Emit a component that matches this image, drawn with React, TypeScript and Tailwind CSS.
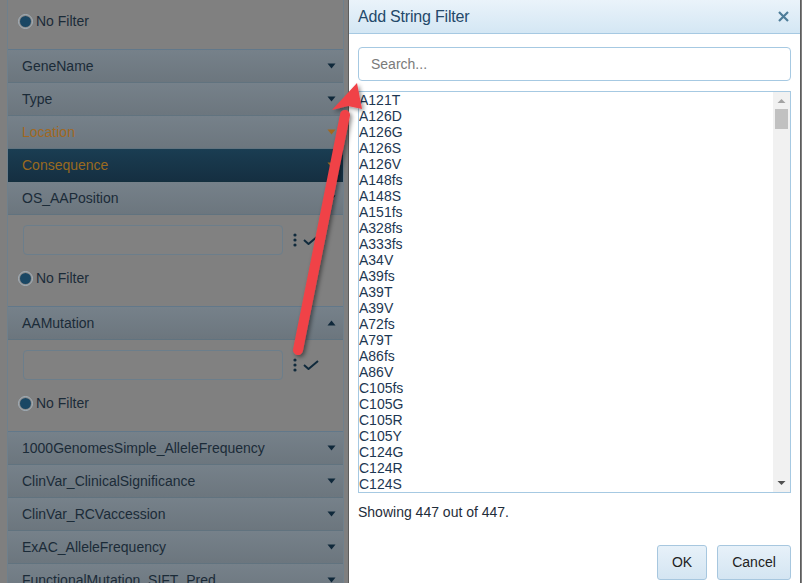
import React from "react";

const items = [
  "A121T","A126D","A126G","A126S","A126V","A148fs","A148S","A151fs","A328fs","A333fs",
  "A34V","A39fs","A39T","A39V","A72fs","A79T","A86fs","A86V","C105fs","C105G",
  "C105R","C105Y","C124G","C124R","C124S",
];

function Tri({ up = false, color = "#0f283a" }: { up?: boolean; color?: string }) {
  return (
    <svg width="9" height="6" viewBox="0 0 9 6" className="shrink-0">
      {up ? <path d="M0.5 5.5 L4.5 0.5 L8.5 5.5 Z" fill={color} /> : <path d="M0.5 0.5 L8.5 0.5 L4.5 5.5 Z" fill={color} />}
    </svg>
  );
}

function Radio() {
  return (
    <div className="flex items-center h-[16px]">
      <div className="w-[15px] h-[15px] rounded-full border border-[#a3b0ba] bg-[#8a8a8a] flex items-center justify-center">
        <div className="w-[11px] h-[11px] rounded-full bg-[#1a4764]" />
      </div>
      <span className="ml-[3px] text-[14px] text-[#1b2b38]">No Filter</span>
    </div>
  );
}

function Content({ input = true, className = "" }: { input?: boolean; className?: string }) {
  return (
    <div className={"h-[92px] border-b border-[#62788a] bg-[#808080] " + className}>
      <div className="pt-[10px] pl-[15px] flex items-center h-[40px]">
        <div className={"w-[260px] h-[30px] rounded-[4px] border border-[#6c7e8b] bg-[#818181] " + (input ? "" : "opacity-0")} />
        <svg width="6" height="14" viewBox="0 0 6 14" className="ml-[9px]">
          <circle cx="3" cy="2" r="1.6" fill="#102a3c" />
          <circle cx="3" cy="7" r="1.6" fill="#102a3c" />
          <circle cx="3" cy="12" r="1.6" fill="#102a3c" />
        </svg>
        <svg width="16" height="10" viewBox="0 0 16 10" className="ml-[5px]">
          <path d="M1 5 L5.5 9 L15 1" stroke="#102a3c" strokeWidth="2" fill="none" />
        </svg>
      </div>
      <div className="mt-[15px] pl-[10px]">
        <Radio />
      </div>
    </div>
  );
}

function Header({ label, color = "#1b2b38", tri = "#0f283a", up = false }: { label: string; color?: string; tri?: string; up?: boolean }) {
  return (
    <div className="h-[33px] border-b border-[#61737f] bg-gradient-to-b from-[#76818a] to-[#6c767e] flex items-center justify-between pl-[14px] pr-[7px]">
      <span className="text-[14px]" style={{ color }}>{label}</span>
      <Tri up={up} color={tri} />
    </div>
  );
}

export default function App() {
  return (
    <div className="relative w-[802px] h-[583px] overflow-hidden bg-[#7f7f7f]" style={{ fontFamily: '"Liberation Sans", Arial, sans-serif' }}>
      {/* left panel */}
      <div className="ml-[7px] w-[337px] border-x border-[#6f808c] mt-[-42px]">
        <Content input={true} />
        <Header label="GeneName" />
        <Header label="Type" />
        <Header label="Location" color="#a1681f" tri="#a1681f" />
        <div className="h-[33px] border-b border-[#14303f] bg-gradient-to-b from-[#1a3d52] to-[#152f41] flex items-center justify-between pl-[14px] pr-[7px]">
          <span className="text-[14px] text-[#9a6a20]">Consequence</span>
          <Tri color="#9a6a20" />
        </div>
        <Header label="OS_AAPosition" />
        <Content />
        <Header label="AAMutation" up />
        <Content />
        <Header label="1000GenomesSimple_AlleleFrequency" />
        <Header label="ClinVar_ClinicalSignificance" />
        <Header label="ClinVar_RCVaccession" />
        <Header label="ExAC_AlleleFrequency" />
        <Header label="FunctionalMutation_SIFT_Pred" />
      </div>

      {/* dialog */}
      <div className="absolute left-[348px] top-0 w-[453px] h-[600px] bg-white border-x border-[#5c5c5c]">
        <div className="h-[34px] border-b border-[#a6c9e2] bg-gradient-to-b from-[#eaf3fa] to-[#d4e7f4] flex items-center justify-between pl-[9px] pr-[11px]">
          <span className="text-[16px] text-[#24496a] tracking-[-0.2px]">Add String Filter</span>
          <svg width="11" height="11" viewBox="0 0 11 11">
            <path d="M1 1 L10 10 M10 1 L1 10" stroke="#4e7d99" strokeWidth="2.2" />
          </svg>
        </div>
        <div className="px-[9px]">
          <div className="mt-[13px] h-[34px] rounded-[4px] border border-[#a6c9e2] flex items-center pl-[12px] text-[14px] text-[#7a7a7a]">
            Search...
          </div>
          <div className="mt-[10px] h-[402px] border border-[#a6c9e2] flex overflow-hidden">
            <div className="flex-1 overflow-hidden">
              {items.map((t) => (
                <div key={t} className="h-[16px] leading-[16px] text-[14px] text-[#1d3752]">{t}</div>
              ))}
            </div>
            <div className="w-[17px] bg-[#f1f1f1] flex flex-col items-center">
              <svg width="9" height="6" viewBox="0 0 9 6" className="mt-[6px]">
                <path d="M0.5 5 L4.5 1 L8.5 5 Z" fill="#a3a3a3" />
              </svg>
              <div className="mt-[5px] w-[13px] h-[20px] bg-[#c1c1c1]" />
              <div className="flex-1" />
              <svg width="9" height="6" viewBox="0 0 9 6" className="mb-[6px]">
                <path d="M0.5 1 L8.5 1 L4.5 5 Z" fill="#505050" />
              </svg>
            </div>
          </div>
          <div className="mt-[11px] h-[16px] leading-[16px] text-[14px] text-[#1f2d3a]">Showing 447 out of 447.</div>
          <div className="mt-[25px] flex justify-end gap-[10px]">
            <div className="w-[50px] h-[35px] rounded-[3px] border border-[#a7c7df] bg-gradient-to-b from-[#e7f1f9] to-[#d4e5f2] flex items-center justify-center text-[14px] text-[#222]">OK</div>
            <div className="w-[74px] h-[35px] rounded-[3px] border border-[#a7c7df] bg-gradient-to-b from-[#e7f1f9] to-[#d4e5f2] flex items-center justify-center text-[14px] text-[#222]">Cancel</div>
          </div>
        </div>
      </div>

      {/* annotation arrow */}
      <svg className="absolute left-0 top-0 pointer-events-none" width="802" height="583" viewBox="0 0 802 583">
        <defs>
          <filter id="sh" x="-20%" y="-20%" width="140%" height="140%">
            <feDropShadow dx="2" dy="2" stdDeviation="2" floodColor="#000" floodOpacity="0.45" />
          </filter>
        </defs>
        <g filter="url(#sh)">
          <line x1="298" y1="350" x2="345" y2="115" stroke="#f04247" strokeWidth="10" strokeLinecap="round" />
          <path d="M357 83 L362 109 L348 106 L332 110 Z" fill="#f04247" />
        </g>
      </svg>
    </div>
  );
}
